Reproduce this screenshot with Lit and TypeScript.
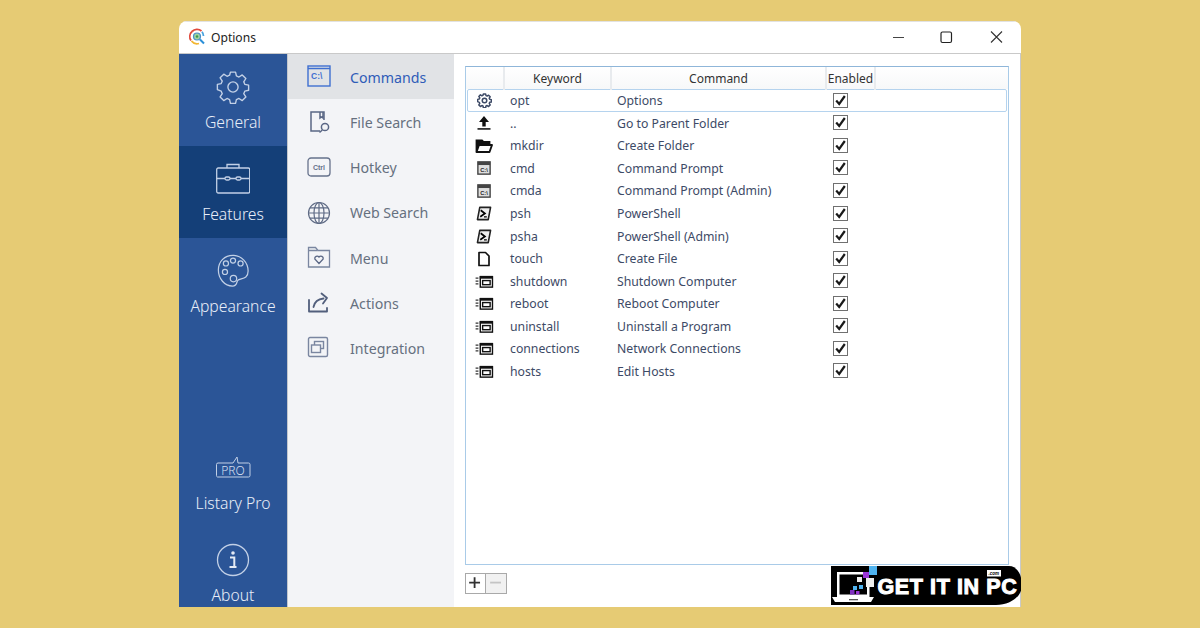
import { LitElement, html, css, svg } from "lit";
import { customElement } from "lit/decorators.js";

const gear = (sw: number) => svg`<g fill="none" stroke="currentColor" stroke-width="${sw}" stroke-linejoin="round"><path d="M13.6 2h4.8l.8 3.6 2.4 1 3.1-2 3.4 3.4-2 3.1 1 2.4 3.6.8v4.8l-3.6.8-1 2.4 2 3.1-3.4 3.4-3.1-2-2.4 1-.8 3.6h-4.8l-.8-3.6-2.4-1-3.1 2-3.4-3.4 2-3.1-1-2.4L1.300 18.400v-4.800l3.600-.8 1-2.400-2-3.100 3.400-3.400 3.100 2 2.400-1z"/><circle cx="16" cy="16" r="4.800"/></g>`;

const rowIcons: Record<string, unknown> = {
  gear: html`<svg class="ri" viewBox="0 0 32 32" width="15" height="15">${gear(3.2)}</svg>`,
  up: html`<svg class="ri" viewBox="0 0 16 16" width="16" height="16"><path d="M8 1 13 7H9.700v4.500H6.300V7H3z" fill="#111"/><rect x="1.500" y="13" width="13" height="1.800" fill="#333"/></svg>`,
  folder: html`<svg class="ri" viewBox="0 0 18 16" width="18" height="16"><path d="M1.500 13.500V2.500h5.500l1.500 1.500H14.500V6.500" fill="#111" stroke="#111" stroke-width="1.800"/><path d="M1.500 14 4 7h13L14.500 14z" fill="#fff" stroke="#111" stroke-width="1.900" stroke-linejoin="round"/></svg>`,
  cmd: html`<svg class="ri" viewBox="0 0 16 16" width="14" height="14"><rect x="1" y="1" width="14" height="14" fill="#dedede" stroke="#444" stroke-width="1.600"/><rect x="1" y="1" width="14" height="3.600" fill="#444"/><text x="8" y="12" text-anchor="middle" class="mini">C:\\</text></svg>`,
  psh: html`<svg class="ri" viewBox="0 0 16 16" width="16" height="15"><path d="M3.500 1.500h11.500l-2.500 13H1z" fill="#eee" stroke="#222" stroke-width="1.700" stroke-linejoin="round"/><path d="M4.500 4.500 9 8l-5 3.500" fill="none" stroke="#000" stroke-width="1.800"/><path d="M8 11.500h3" stroke="#000" stroke-width="1.300"/></svg>`,
  file: html`<svg class="ri" viewBox="0 0 16 16" width="16" height="16"><path d="M3 1.500h6.500L13 5v9.500H3z" fill="#fff" stroke="#111" stroke-width="1.700" stroke-linejoin="round"/></svg>`,
  sys: html`<svg class="ri" viewBox="0 0 20 16" width="19" height="15"><rect x="5.500" y="3" width="13" height="11" fill="none" stroke="#111" stroke-width="1.500"/><rect x="5" y="2" width="14" height="3" fill="#111"/><rect x="8" y="7" width="8" height="4.400" fill="none" stroke="#111" stroke-width="1.500"/><path d="M.5 4.500h3M.5 7.500h3M.5 10.500h3" stroke="#333" stroke-width="1.300"/></svg>`,
};

const rows = [
  ["gear", "opt", "Options"],
  ["up", "..", "Go to Parent Folder"],
  ["folder", "mkdir", "Create Folder"],
  ["cmd", "cmd", "Command Prompt"],
  ["cmd", "cmda", "Command Prompt (Admin)"],
  ["psh", "psh", "PowerShell"],
  ["psh", "psha", "PowerShell (Admin)"],
  ["file", "touch", "Create File"],
  ["sys", "shutdown", "Shutdown Computer"],
  ["sys", "reboot", "Reboot Computer"],
  ["sys", "uninstall", "Uninstall a Program"],
  ["sys", "connections", "Network Connections"],
  ["sys", "hosts", "Edit Hosts"],
];

const subIcons: Record<string, unknown> = {
  cmd: svg`<g fill="none" stroke="#3f6fd0" stroke-width="1.400"><rect x="1" y="1" width="22" height="20"/><path d="M1 3.500h22"/></g><text x="4" y="14" class="sub-t big" fill="#3f6fd0">C:\\</text>`,
  file: svg`<g fill="none" stroke="#5a6785" stroke-width="1.500"><path d="M17 9V1H4v19h9"/><path d="M13 1v6l1.500-1 1.500 1V1"/><circle cx="18" cy="16" r="3.600"/><path d="M15.300 19 12.500 21.500"/></g>`,
  ctrl: svg`<rect x="1" y="2" width="22" height="18" rx="3" fill="none" stroke="#66728c" stroke-width="1.300"/><text x="12" y="14" text-anchor="middle" class="sub-t" fill="#66728c">Ctrl</text>`,
  web: svg`<g fill="none" stroke="#5f6b85" stroke-width="1.200"><circle cx="12" cy="12" r="10.500"/><ellipse cx="12" cy="12" rx="5" ry="10.500"/><path d="M12 1.500v21M1.500 12h21M3 6.800h18M3 17.200h18"/></g>`,
  menu: svg`<g fill="none" stroke="#7a86a0" stroke-width="1.300"><path d="M1.500 21V1.500h7l2.500 3h11.500V21z"/><path d="M1.500 4.500h9"/></g><path d="M12 17.500 7.800 13a2.400 2.400 0 0 1 4.200-2 2.400 2.400 0 0 1 4.200 2z" fill="none" stroke="#5a6785" stroke-width="1.300"/>`,
  act: svg`<g fill="none" stroke="#525f7c" stroke-width="1.800" stroke-linecap="round" stroke-linejoin="round"><path d="M2 9v11.500h18V17"/><path d="M6.500 16c1-5 4.500-8 10-8.500"/><path d="M14.500 2.500 20 7l-4 5.500"/></g>`,
  integ: svg`<g fill="none" stroke="#7a86a0" stroke-width="1.400"><rect x="1.500" y="1.500" width="19" height="19" rx="1.500"/><rect x="7.500" y="5.500" width="9" height="7"/><rect x="4.500" y="9" width="9" height="7.500" fill="#f3f4f7"/></g>`,
};

const subs = [
  ["cmd", "Commands"],
  ["file", "File Search"],
  ["ctrl", "Hotkey"],
  ["web", "Web Search"],
  ["menu", "Menu"],
  ["act", "Actions"],
  ["integ", "Integration"],
];

@customElement("app-root")
export class AppRoot extends LitElement {
  static styles = css`
    :host { display: block; width: 1200px; height: 628px; background: #e6cb74; overflow: hidden; font-family: "Noto Sans", "Open Sans", sans-serif; }
    .page { padding: 21px 179px; box-sizing: border-box; height: 628px; }
    .win { position: relative; width: 842px; height: 586px; display: flex; flex-direction: column; background: #fff; border-radius: 8px 8px 0 0; overflow: hidden; }
    .title { height: 32px; flex: none; display: flex; align-items: center; padding: 0 0 0 9px; border-bottom: 1px solid #c9c9c9; font-size: 12.100px; color: #222; box-shadow: inset 0 1px #e2e2e2; }
    .title .logo { margin-right: 5px; }
    .ctrls { margin-left: auto; display: flex; align-items: center; }
    .ctrls svg { display: block; width: 50px; height: 16px; }
    .body { flex: 1; display: flex; min-height: 0; }
    .side { width: 108px; flex: none; background: #2b5597; display: flex; flex-direction: column; color: #e8eef8; border-right: 1px solid #c3c7cd; }
    .nav { height: 92px; flex: none; display: flex; flex-direction: column; align-items: center; padding-top: 15.500px; box-sizing: border-box; font-size: 15.700px; font-weight: 300; }
    .nav svg { display: block; height: 34px; width: 34px; flex: none; margin-bottom: 8px; color: #c2d0e6; }
    .nav.on { background: #143f78; }
    .spacer { flex: 1; }
    .nav.pro { height: 94px; padding-top: 3px; }
    .nav.pro svg { height: 26px; width: 36px; margin-bottom: 14.500px; }
    .nav.about { height: 64px; padding-top: 0; }
    .nav.about svg { margin-bottom: 7.500px; }
    .nav span { line-height: 21px; white-space: nowrap; }
    .sub { width: 166px; flex: none; background: #f3f4f7; }
    .si { height: 45.200px; box-sizing: border-box; padding-top: 1.500px; display: flex; align-items: center; padding-left: 19px; font-size: 14.200px; color: #66707f; }
    .si svg { width: 24px; height: 24px; flex: none; margin-right: 19px; display: block; }
    .si.on { background: #e1e3e6; color: #2f5cb8; }
    .sub-t { font: bold 7px "Liberation Sans", sans-serif; }
    .sub-t.big { font-size: 8.500px; }
    .main { flex: 1; padding: 12px 11px 0 11px; display: flex; flex-direction: column; border-right: 1px solid #c9c9c9; }
    .table { height: 499px; flex: none; border: 1px solid #a9cbe8; border-top-color: #8fb6d9; box-sizing: border-box; }
    .grid { display: grid; grid-template-columns: 39px 107px 215px 49px 1fr; }
    .head { height: 22px; font-size: 12px; color: #333; text-align: center; line-height: 23px; background: linear-gradient(#fff, #f7f8f9); }
    .head div { border-right: 2px solid #e8ebee; box-sizing: border-box; }
    .head div:last-child { border: 0; }
    .row { height: 22.550px; box-sizing: border-box; padding-top: 1px; margin: 0 1px; grid-template-columns: 37px 107px 215px 49px 1fr; align-items: center; font-size: 12.250px; color: #3d4a66; border: 1px solid transparent; }
    .row.on { border-color: #b5d3ee; border-radius: 2px; }
    .row .ic { display: flex; justify-content: center; margin-left: -5px; }
    .ri { display: block; }
    .mini { font: bold 6.500px "Liberation Sans", sans-serif; fill: #222; }
    .kw { padding-left: 5px; }
    .cmd { padding-left: 5px; white-space: nowrap; }
    .chk { width: 15px; height: 15px; margin: -1px 0 0 6px; display: block; }
    .foot { display: flex; padding-top: 8px; }
    .foot button { width: 21px; height: 21px; padding: 0; border: 1px solid #a9a9a9; background: #fff; display: block; }
    .foot button + button { border-left: 0; background: #f1f1f1; }
    .foot svg { display: block; }
    .mark { position: absolute; right: -1px; bottom: 2px; width: 191px; height: 39px; }
    .mark svg { display: block; }
    .mark .t { font: 900 21.500px "Liberation Sans", sans-serif; fill: #fff; stroke: #fff; stroke-width: 1px; letter-spacing: 0.600px; }
    .mark .c { font: italic bold 4.500px "Liberation Sans", sans-serif; fill: #000; }
  `;

  render() {
    return html`<div class="page"><div class="win">
      <div class="title">
        <svg class="logo" width="18" height="18" viewBox="0 0 18 18">
          <g fill="none" stroke-width="1.800"><path d="M3 12.500A7 7 0 0 1 4 3.500" stroke="#e0493c"/><path d="M4 3.500A7 7 0 0 1 13.500 3" stroke="#e0493c"/><path d="M14 3.800A7 7 0 0 1 15.500 8" stroke="#4aa3df"/><path d="M3.500 13A7 7 0 0 0 11 15.500" stroke="#f2b632"/></g>
          <circle cx="9" cy="8.500" r="3.500" fill="#9fd0a0" stroke="#4a8fc9" stroke-width="1.200"/><circle cx="9" cy="8.500" r="1.200" fill="#3a9a4f"/>
          <path d="M12 11.500 16 15.500" stroke="#2b8fd8" stroke-width="2"/>
        </svg>
        <span>Options</span>
        <div class="ctrls">
          <svg viewBox="0 0 50 16"><path d="M22 8.500h11" stroke="#444" stroke-width="1.200"/></svg>
          <svg viewBox="0 0 50 16"><rect x="20" y="3" width="10.500" height="10.500" rx="1.500" fill="none" stroke="#222" stroke-width="1.200"/></svg>
          <svg viewBox="0 0 50 16"><path d="M20 2.500 31 13.500M31 2.500 20 13.500" stroke="#333" stroke-width="1.100"/></svg>
        </div>
      </div>
      <div class="body">
        <div class="side">
          <div class="nav"><svg viewBox="0 0 32 32">${gear(1.300)}</svg><span>General</span></div>
          <div class="nav on"><svg viewBox="0 0 34 34"><g fill="none" stroke="currentColor" stroke-width="1.300"><rect x="0.700" y="6" width="33" height="25" rx="1.500"/><path d="M11 6V2.500h12V6M0.700 16.500H9M14 16.500h6M25 16.500h8.500"/><rect x="9" y="15" width="5" height="3" rx="1.500"/><rect x="20" y="15" width="5" height="3" rx="1.500"/></g></svg><span>Features</span></div>
          <div class="nav"><svg viewBox="0 0 34 36"><g fill="none" stroke="currentColor" stroke-width="1.300"><path d="M18 1.500C8 1 1.500 8 1.500 17c0 9 6.500 17 15 17 5 0 4-4 5.500-6 2-3 11 0 11-10 0-9-7-16-15-16.500z"/><circle cx="9.500" cy="10" r="2.700"/><circle cx="17" cy="7" r="2.700"/><circle cx="25" cy="10" r="2.700"/><circle cx="8.500" cy="19" r="2.700"/><circle cx="17.500" cy="26" r="3.400"/></g></svg><span>Appearance</span></div>
          <div class="spacer"></div>
          <div class="nav pro"><svg viewBox="0 0 36 26"><path d="M3 11h15l4-6 1 6h10.500a1.500 1.500 0 0 1 1.500 1.500V23.500a1.500 1.500 0 0 1-1.500 1.500H2.500A1.500 1.500 0 0 1 1.500 23.500V12.500A1.500 1.500 0 0 1 3 11z" fill="none" stroke="#c2d0e6" stroke-width="1"/><text x="18" y="22.500" text-anchor="middle" style="font:300 12px 'Noto Sans',sans-serif" fill="#d5dfef">PRO</text></svg><span>Listary Pro</span></div>
          <div class="nav about"><svg viewBox="0 0 34 34"><circle cx="17" cy="17" r="15.500" fill="none" stroke="currentColor" stroke-width="1.300"/><circle cx="17" cy="10" r="1.800" fill="#e4ebf5"/><path d="M14 14.500h4.300V24H20.500M13.500 24h5" fill="none" stroke="#e4ebf5" stroke-width="2"/></svg><span>About</span></div>
        </div>
        <div class="sub">
          ${subs.map(([k, t], i) => html`<div class="si ${i === 0 ? "on" : ""}"><svg viewBox="0 0 24 24">${subIcons[k]}</svg><span>${t}</span></div>`)}
        </div>
        <div class="main">
          <div class="table">
            <div class="grid head"><div></div><div>Keyword</div><div>Command</div><div>Enabled</div><div></div></div>
            <div class="rows">
              ${rows.map(([ic, k, c], i) => html`<div class="grid row ${i === 0 ? "on" : ""}">
                <div class="ic">${rowIcons[ic]}</div><div class="kw">${k}</div><div class="cmd">${c}</div>
                <div><svg class="chk" viewBox="0 0 15 15"><rect x=".5" y=".5" width="14" height="14" fill="#fff" stroke="#707070"/><path d="M3.200 7.500l3 3.500L11.800 3" fill="none" stroke="#1a1a1a" stroke-width="2.200"/></svg></div><div></div>
              </div>`)}
            </div>
          </div>
          <div class="foot">
            <button aria-label="Add"><svg viewBox="0 0 21 21" width="19" height="19"><path d="M9.500 3.500v12M3.500 9.500h12" stroke="#333" stroke-width="2"/></svg></button>
            <button aria-label="Remove"><svg viewBox="0 0 21 21" width="20" height="19"><path d="M4 9.500h12" stroke="#c4c4c4" stroke-width="2"/></svg></button>
          </div>
        </div>
      </div>
      <div class="mark">
        <svg viewBox="0 0 191 39" width="191" height="39">
          <path d="M0 0H178C186 0 191 9 191 19 C191 30 180 39 165 39H0z" fill="#000"/>
          <rect x="156" y="4" width="14" height="6.500" fill="#fff"/>
          <text x="157.500" y="9.300" class="c">.com</text>
          <path d="M6 31V6h26v2.500H8.500V28.500H36V21h2.500V31z" fill="#fff"/>
          <path d="M1 31h42l-3 5H4z" fill="#fff"/>
          <rect x="18" y="33" width="9" height="1.300" fill="#555"/>
          <rect x="38" y="0" width="8" height="9" fill="#4fb3ef"/>
          <rect x="32" y="6" width="6" height="6" fill="#9b36d6"/>
          <rect x="35" y="12" width="8" height="9" fill="#eee"/>
          <rect x="26" y="11" width="5" height="5" fill="#eee"/>
          <rect x="22" y="20" width="4" height="4" fill="#4fb3ef"/>
          <rect x="28" y="19" width="4" height="4" fill="#4fb3ef"/>
          <rect x="19" y="24" width="4.500" height="4.500" fill="#7f2fc0"/>
          <rect x="25" y="25" width="3.500" height="3.500" fill="#9b36d6"/>
          <text x="46.500" y="27.500" class="t">GET IT IN PC</text>
        </svg>
      </div>
    </div></div>`;
  }
}
